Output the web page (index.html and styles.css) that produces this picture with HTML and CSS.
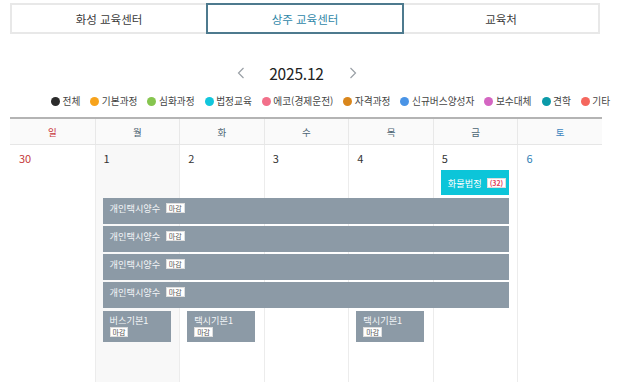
FILE: index.html
```html
<!DOCTYPE html>
<html lang="ko">
<head>
<meta charset="utf-8">
<title>교육일정</title>
<link rel="stylesheet" href="styles.css">
</head>
<body>
<div class="page">
  <div class="tabs">
    <div class="tab">화성 교육센터</div>
    <div class="tab active">상주 교육센터</div>
    <div class="tab">교육처</div>
  </div>

  <div class="month-nav">
    <span class="arrow"><svg width="8" height="12" viewBox="0 0 8 12"><path d="M6.5 1 L1.5 6 L6.5 11" fill="none" stroke="#9aa0a6" stroke-width="1.2"/></svg></span>
    <span class="month">2025.12</span>
    <span class="arrow"><svg width="8" height="12" viewBox="0 0 8 12"><path d="M1.5 1 L6.5 6 L1.5 11" fill="none" stroke="#9aa0a6" stroke-width="1.2"/></svg></span>
  </div>

  <ul class="legend">
    <li><i class="dot c-all"></i>전체</li>
    <li><i class="dot c-basic"></i>기본과정</li>
    <li><i class="dot c-adv"></i>심화과정</li>
    <li><i class="dot c-law"></i>법정교육</li>
    <li><i class="dot c-eco"></i>에코(경제운전)</li>
    <li><i class="dot c-cert"></i>자격과정</li>
    <li><i class="dot c-bus"></i>신규버스양성자</li>
    <li><i class="dot c-sub"></i>보수대체</li>
    <li><i class="dot c-tour"></i>견학</li>
    <li><i class="dot c-etc"></i>기타</li>
  </ul>

  <div class="calendar">
    <div class="head">
      <div class="hd sun">일</div>
      <div class="hd">월</div>
      <div class="hd">화</div>
      <div class="hd">수</div>
      <div class="hd">목</div>
      <div class="hd">금</div>
      <div class="hd sat">토</div>
    </div>
    <div class="week">
      <div class="bg c1"></div>
      <div class="bg c2 today"></div>
      <div class="bg c3"></div>
      <div class="bg c4"></div>
      <div class="bg c5"></div>
      <div class="bg c6"></div>
      <div class="bg c7"></div>

      <div class="num c1 sun">30</div>
      <div class="num c2">1</div>
      <div class="num c3">2</div>
      <div class="num c4">3</div>
      <div class="num c5">4</div>
      <div class="num c6">5</div>
      <div class="num c7 sat">6</div>

      <div class="ev law c6 r2">화물법정 <span class="badge red">(32)</span></div>

      <div class="ev bar r3">개인택시양수 <span class="badge">마감</span></div>
      <div class="ev bar r4">개인택시양수 <span class="badge">마감</span></div>
      <div class="ev bar r5">개인택시양수 <span class="badge">마감</span></div>
      <div class="ev bar r6">개인택시양수 <span class="badge">마감</span></div>

      <div class="ev small c2 r7">버스기본1<span class="badge">마감</span></div>
      <div class="ev small c3 r7">택시기본1<span class="badge">마감</span></div>
      <div class="ev small c5 r7">택시기본1<span class="badge">마감</span></div>
    </div>
  </div>
</div>
</body>
</html>
```

FILE: styles.css
```css
* { box-sizing: border-box; }
html, body { margin: 0; padding: 0; background: #fff; }
body {
  font-family: "Noto Sans CJK KR", "Noto Sans", sans-serif;
  color: #333;
  width: 622px;
  height: 382px;
  overflow: hidden;
}
.page { padding-top: 3px; }

/* tabs */
.tabs {
  display: flex;
  margin-left: 10px;
  width: 590px;
  height: 31px;
}
.tab {
  flex: 1;
  display: flex;
  align-items: center;
  justify-content: center;
  border: 2px solid #e8e8e8;
  margin-left: -2px;
  font-size: 11.5px;
  color: #3a3a3a;
  position: relative;
}
.tab:first-child { margin-left: 0; }
.tab.active {
  border-color: #4d7a8e;
  color: #2f87a8;
  z-index: 1;
}

/* month nav */
.month-nav {
  margin-top: 27px;
  height: 24px;
  display: flex;
  align-items: center;
  justify-content: center;
  padding-right: 29px;
}
.month {
  font-size: 15.5px;
  color: #222;
  width: 92px;
  text-align: center;
  letter-spacing: -0.2px;
}
.arrow { display: flex; width: 20px; justify-content: center; }

/* legend */
.legend {
  list-style: none;
  margin: 9px 0 0 0;
  padding: 0 0 0 51px;
  height: 14px;
  display: flex;
  align-items: center;
  white-space: nowrap;
  font-size: 9.7px;
  color: #444;
}
.legend li { display: flex; align-items: center; margin-right: 10px; }
.dot { width: 9px; height: 9px; border-radius: 50%; display: inline-block; margin-right: 2.5px; }
.c-all { background: #2b2b2b; }
.c-basic { background: #f7a31c; }
.c-adv { background: #86c54f; }
.c-law { background: #12c6dc; }
.c-eco { background: #f2708a; }
.c-cert { background: #d9861c; }
.c-bus { background: #4a94e6; }
.c-sub { background: #d466c2; }
.c-tour { background: #0b9aa8; }
.c-etc { background: #f5675e; }

/* calendar */
.calendar {
  margin: 9px 0 0 10px;
  width: 592px;
}
.head {
  display: grid;
  grid-template-columns: repeat(7, 1fr);
  border-top: 2px solid #b4b4b4;
  background: #fafafa;
  border-bottom: 1px solid #e6e6e6;
  height: 28px;
}
.hd {
  display: flex;
  align-items: center;
  justify-content: center;
  font-size: 9.5px;
  color: #4c6473;
  border-left: 1px solid #e8e8e8;
}
.hd:first-child { border-left: none; }
.hd.sun { color: #c9383a; }
.hd.sat { color: #3d86bf; }

.week {
  display: grid;
  grid-template-columns: repeat(7, 1fr);
  grid-template-rows: 25px 26px 28px 28px 28px 28px 34px 40px;
}
.bg {
  grid-row: 1 / -1;
  border-left: 1px solid #ececec;
}
.bg.c1 { border-left: none; }
.bg.today { background: #f8f8f8; }

.c1 { grid-column: 1; }
.c2 { grid-column: 2; }
.c3 { grid-column: 3; }
.c4 { grid-column: 4; }
.c5 { grid-column: 5; }
.c6 { grid-column: 6; }
.c7 { grid-column: 7; }

.num {
  grid-row: 1;
  font-size: 11px;
  color: #333;
  padding: 6px 0 0 9px;
  line-height: 15px;
}
.num.sun { color: #c53a3a; }
.num.sat { color: #2f7fb5; }

.r2 { grid-row: 2; }
.r3 { grid-row: 3; }
.r4 { grid-row: 4; }
.r5 { grid-row: 5; }
.r6 { grid-row: 6; }
.r7 { grid-row: 7; }

.ev {
  color: #f4f6f8;
  font-size: 9.2px;
  margin: 0 8px;
  padding-left: 7px;
}
.ev.law {
  background: #0cc5d9;
  height: 25px;
  display: flex;
  align-items: center;
  padding-left: 7px;
  color: #fff;
  margin-right: 8px;
}
.ev.bar {
  grid-column: 2 / 7;
  background: #8c9aa6;
  margin-top: 2px;
  height: 26px;
  padding-top: 4px;
  line-height: 12px;
}
.ev.small {
  background: #8c9aa6;
  margin-top: 3px;
  height: 31px;
  width: 68px;
  padding-top: 3px;
  line-height: 12px;
}
.badge {
  display: inline-block;
  background: #fff;
  color: #555;
  font-size: 7px;
  line-height: 8px;
  padding: 0 2px;
  margin-left: 3px;
  vertical-align: 1px;
  border: 0.5px solid #ddd;
}
.ev.small .badge { display: table; margin: 1px 0 0 0; }
.badge.red { color: #e0405a; font-weight: bold; font-size: 7px; margin-left: 5px; }
```
